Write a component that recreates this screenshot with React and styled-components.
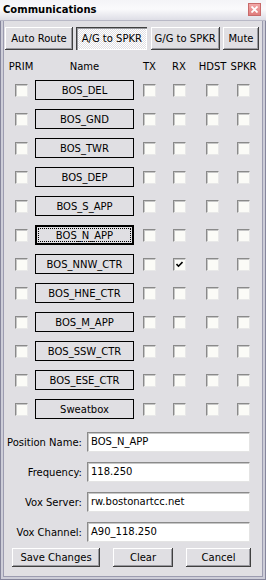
import React from "react";
import styled, { createGlobalStyle, css } from "styled-components";

const GlobalStyle = createGlobalStyle`
  html, body {
    margin: 0;
    padding: 0;
    background: #e0dfe3;
  }
  body {
    font-family: "DejaVu Sans", Verdana, sans-serif;
    font-size: 10px;
    color: #000;
  }
  * {
    box-sizing: border-box;
  }
`;

const Window = styled.div`
  display: flex;
  flex-direction: column;
  width: 266px;
  height: 580px;
  background: #e0dfe3;
`;

const TitleBar = styled.div`
  display: flex;
  align-items: center;
  justify-content: space-between;
  height: 21px;
  padding: 0 5px 2px 3px;
  background: linear-gradient(#f4f4f7, #fafafc 45%, #dedee6);
  border-bottom: 1px solid #b8b8c6;
  font-weight: bold;
`;

const Close = styled.span`
  display: flex;
  align-items: center;
  justify-content: center;
  width: 13px;
  height: 13px;
  background: linear-gradient(#f2a8a8, #e07c7c);
  border: 1px solid #c86a6a;
`;

const Frame = styled.div`
  flex: 1;
  display: flex;
  flex-direction: column;
  padding: 0 2px 2px;
  background: #cdcdd8;
  border: 1px solid #86869c;
  border-top: none;
`;

const Body = styled.div`
  flex: 1;
  display: flex;
  flex-direction: column;
  background: #e0dfe3;
  border: 1px solid #9c9cb0;
  border-top: none;
`;

const raised = css`
  border: none;
  background: #e0dfe3;
  box-shadow: inset -1px -1px #404040, inset 1px 1px #fff,
    inset -2px -2px #9a9aa0;
`;

const pressed = css`
  border: none;
  background-color: #f4f4f6;
  background-image: repeating-conic-gradient(#fff 0 25%, #e0dfe3 0 50%);
  background-size: 2px 2px;
  box-shadow: inset 1px 1px #404040, inset 2px 2px #9a9aa0,
    inset -1px -1px #fff;
`;

const Button = styled.button`
  ${({ $down }) => ($down ? pressed : raised)};
  width: ${({ $w }) => $w}px;
  height: ${({ $h }) => $h || 23}px;
  padding: 0;
  font: inherit;
  color: #000;
`;

const Toolbar = styled.div`
  display: flex;
  justify-content: space-between;
  margin: 6px 3px 0 1px;
`;

const cols = css`
  display: grid;
  grid-template-columns: 28px 99px 31px 28px 39px 23px;
  padding-left: 3px;
  justify-items: center;
`;

const Header = styled.div`
  ${cols};
  margin-top: 10px;
  height: 14px;
  line-height: 14px;
`;

const Table = styled.div`
  ${cols};
  margin-top: 6px;
  grid-auto-rows: 20px;
  row-gap: 9px;
  align-items: center;
`;

const NameButton = styled.button`
  position: relative;
  width: 100%;
  height: 20px;
  padding: 0;
  font: inherit;
  color: #000;
  background: #e0dfe3;
  border: ${({ $focus }) => ($focus ? 2 : 1)}px solid #000;

  ${({ $focus }) =>
    $focus &&
    css`
      &::after {
        content: "";
        position: absolute;
        inset: 1px;
        border: 1px dotted #000;
      }
    `}
`;

const Check = styled.span`
  display: flex;
  align-items: center;
  justify-content: center;
  width: 13px;
  height: 13px;
  background: #fbfbf7;
  border: 1px solid;
  border-color: #8a8a8a #e8e8e8 #e8e8e8 #8a8a8a;
  box-shadow: inset 1px 1px #c6c6c6;
`;

const Form = styled.div`
  display: grid;
  grid-template-columns: 78px 163px;
  grid-auto-rows: 20px;
  column-gap: 5px;
  row-gap: 10px;
  align-items: center;
  margin-top: 13px;
`;

const Label = styled.label`
  text-align: right;
  white-space: nowrap;
`;

const Field = styled.div`
  height: 20px;
  line-height: 18px;
  padding-left: 3px;
  background: #fff;
  border: 1px solid;
  border-color: #8a8a8a #e4e4e4 #e4e4e4 #8a8a8a;
  box-shadow: inset 1px 1px #c6c6c6;
  white-space: nowrap;
`;

const Footer = styled.div`
  display: flex;
  gap: 13px;
  margin: 6px 0 0 8px;
`;

const names = [
  "BOS_DEL",
  "BOS_GND",
  "BOS_TWR",
  "BOS_DEP",
  "BOS_S_APP",
  "BOS_N_APP",
  "BOS_NNW_CTR",
  "BOS_HNE_CTR",
  "BOS_M_APP",
  "BOS_SSW_CTR",
  "BOS_ESE_CTR",
  "Sweatbox",
];

function Box({ checked }) {
  return (
    <Check>
      {checked && (
        <svg width="7" height="7" viewBox="0 0 7 7">
          <polyline points="0.5,3 2.5,5.2 6.5,1" fill="none" stroke="#000" strokeWidth="1.6" />
        </svg>
      )}
    </Check>
  );
}

export default function App() {
  return (
    <>
      <GlobalStyle />
      <Window>
        <TitleBar>
          <span>Communications</span>
          <Close>
            <svg width="7" height="7" viewBox="0 0 7 7">
              <path d="M0.5 0.5 L6.5 6.5 M6.5 0.5 L0.5 6.5" stroke="#fff" strokeWidth="1.8" />
            </svg>
          </Close>
        </TitleBar>
        <Frame>
          <Body>
            <Toolbar>
              <Button $w={68}>Auto Route</Button>
              <Button $w={71} $down>A/G to SPKR</Button>
              <Button $w={69}>G/G to SPKR</Button>
              <Button $w={36}>Mute</Button>
            </Toolbar>

            <Header>
              <span>PRIM</span>
              <span>Name</span>
              <span>TX</span>
              <span>RX</span>
              <span>HDST</span>
              <span>SPKR</span>
            </Header>

            <Table>
              {names.map((name, i) => (
                <React.Fragment key={name}>
                  <Box />
                  <NameButton $focus={i === 5}>{name}</NameButton>
                  <Box />
                  <Box checked={i === 6} />
                  <Box />
                  <Box />
                </React.Fragment>
              ))}
            </Table>

            <Form>
              <Label>Position Name:</Label>
              <Field>BOS_N_APP</Field>
              <Label>Frequency:</Label>
              <Field>118.250</Field>
              <Label>Vox Server:</Label>
              <Field>rw.bostonartcc.net</Field>
              <Label>Vox Channel:</Label>
              <Field>A90_118.250</Field>
            </Form>

            <Footer>
              <Button $w={88} $h={19}>Save Changes</Button>
              <Button $w={60} $h={19}>Clear</Button>
              <Button $w={65} $h={19}>Cancel</Button>
            </Footer>
          </Body>
        </Frame>
      </Window>
    </>
  );
}
